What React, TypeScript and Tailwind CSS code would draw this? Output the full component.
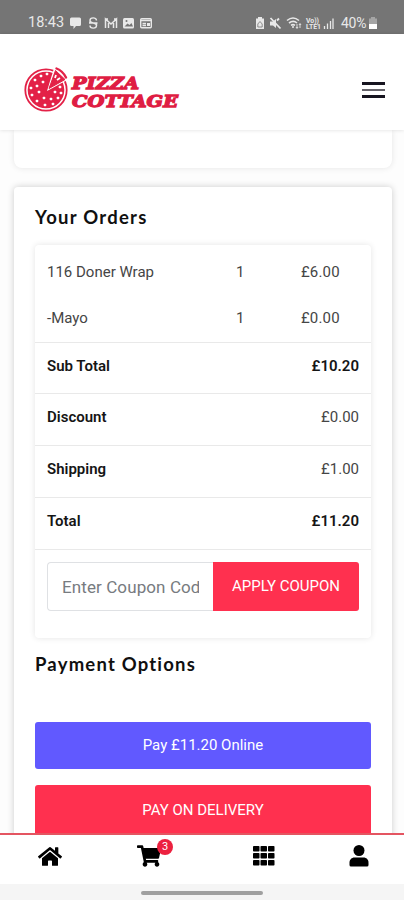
import { FaHome, FaShoppingCart } from 'react-icons/fa'

interface OrderItem {
  name: string
  quantity: number
  price: string
}

interface SummaryLine {
  label: string
  amount: string
  strong?: boolean
}

const items: OrderItem[] = [
  { name: '116 Doner Wrap', quantity: 1, price: '£6.00' },
  { name: '-Mayo', quantity: 1, price: '£0.00' },
]

const summary: SummaryLine[] = [
  { label: 'Sub Total', amount: '£10.20', strong: true },
  { label: 'Discount', amount: '£0.00' },
  { label: 'Shipping', amount: '£1.00' },
  { label: 'Total', amount: '£11.20', strong: true },
]

const pepperoni = [
  [17, 12], [23, 10], [11, 16], [19, 18], [13, 22], [7, 24], [15, 28], [8, 31],
  [13, 37], [20, 34], [21, 41], [27, 35], [29, 40], [34, 34], [31, 28], [37, 29], [36, 23],
]

function StatusBar() {
  return (
    <div className="flex h-[34px] shrink-0 bg-[#757575] pt-[15px] pl-[28px] text-[#e8e8e8]">
      <span className="w-[42px] text-[14.5px] leading-4 whitespace-nowrap">18:43</span>
      <svg className="h-4 w-[84px]" viewBox="0 0 84 16" fill="none" stroke="currentColor">
        <path d="M1.5 2.500h8A1.500 1.500 0 0 1 11 4v5.500A1.500 1.500 0 0 1 9.500 11H6l-2.500 3v-3h-2A1.500 1.500 0 0 1 0 9.500V4a1.500 1.500 0 0 1 1.500-1.500z" fill="currentColor" stroke="none" />
        <path d="M26.500 5.500C26.500 2 20 2 20 5.500S26.500 7 26.500 10.500 20 14 20 10.500M20 5.500V8M26.500 8v3M19 8h8.500" strokeWidth="1.4" />
        <path d="M35.500 13V4l5.500 5 5.500-5v9M38.500 13V8M43.500 13V8M35 4h3M44 4h3" strokeWidth="1.5" />
        <rect x="53" y="3" width="11" height="10.500" rx="1.500" fill="currentColor" stroke="none" />
        <path d="m54.500 11.500 3-3 2 1.500 2-2 1.500 3.500z" fill="#757575" stroke="none" />
        <circle cx="56.500" cy="6" r="1" fill="#757575" stroke="none" />
        <rect x="70.700" y="3.700" width="10.600" height="9" rx="1" strokeWidth="1.400" />
        <path d="M71 5.500h10M72.500 8.500h3.500M72.500 10.500h3.500" strokeWidth="1.600" />
        <path d="M77 8h3v3h-3z" fill="currentColor" stroke="none" />
      </svg>
      <svg className="ml-[100px] h-4 w-[84px]" viewBox="0 0 84 16" fill="none" stroke="currentColor">
        <path d="M4 2h4v1.500h2V14H2V3.500h2z" fill="currentColor" stroke="none" />
        <path d="m3.800 9 2.200-2.500L8.200 9v3H3.800z" stroke="#757575" strokeWidth="0.800" />
        <path d="M16 6.500h3L22 4v9l-3-2.500h-3z" fill="currentColor" stroke="none" />
        <path d="m16.500 3 10 10.500M25 3.500l-2 2" strokeWidth="1.800" />
        <path d="M33 5.500c4-3.300 8-3.300 12 0M35 8c3-2.300 5.500-2.300 8 0M37 10.300c1.500-1 2.500-1 4 0" strokeWidth="1.600" />
        <circle cx="39" cy="12" r="1" fill="currentColor" stroke="none" />
        <path d="M43 9v4m-1-1 1 1.500L44 12M46 13V9m-1 1 1-1.500L47 10" strokeWidth="0.900" />
        <text x="52" y="7.500" fontSize="6.500" fontWeight="700" textLength="13" lengthAdjust="spacingAndGlyphs" fill="currentColor" stroke="none">Vo))</text>
        <text x="52" y="14" fontSize="6.500" fontWeight="700" textLength="15" lengthAdjust="spacingAndGlyphs" fill="currentColor" stroke="none">LTE1</text>
        <path d="M70.500 14v-3M73.500 14V8.500M76.500 14V6M79 14V3.500" strokeWidth="1.300" />
      </svg>
      <span className="ml-[3px] w-7 text-[14px] leading-4 tracking-[-0.3px] whitespace-nowrap">40%</span>
      <svg className="-ml-px h-4 w-2.5" viewBox="0 0 10 16">
        <path d="M3 2h4v1.500h2V9H1V3.500h2z" fill="#a5a5a5" />
        <path d="M1 9h8v5H1z" fill="#fff" />
      </svg>
    </div>
  )
}

function Logo() {
  return (
    <svg className="h-12 w-[160px]" viewBox="0 0 160 48" fill="none">
      <circle cx="22" cy="26" r="20.700" stroke="#e32147" strokeWidth="1.800" />
      <circle cx="22" cy="26" r="18.300" fill="#e32147" />
      <path d="M23 27 31 1l16 13z" fill="#fff" />
      {pepperoni.map(([x, y]) => (
        <rect key={`${x}-${y}`} x={x - 1.3} y={y - 1.3} width="2.600" height="2.600" rx="0.700" fill="#fff" />
      ))}
      <path d="m25 24.500 6.500-18 9.500 9z" fill="#e32147" stroke="#e32147" />
      <path d="M32.500 4.500c4 1.500 7.500 5 9.500 9" stroke="#e32147" strokeWidth="2.400" strokeLinecap="round" />
      <path d="m32 11-1 3M36 14l-3 2" stroke="#fff" strokeWidth="1.800" />
      <g
        fill="#df1d43"
        stroke="#df1d43"
        strokeWidth="1.300"
        fontFamily="'DejaVu Serif', serif"
        fontWeight="700"
        fontStyle="italic"
        fontSize="17.500"
      >
        <text x="48" y="25" textLength="67" lengthAdjust="spacingAndGlyphs">PIZZA</text>
        <text x="48" y="43" textLength="106" lengthAdjust="spacingAndGlyphs">COTTAGE</text>
      </g>
    </svg>
  )
}

function Header() {
  return (
    <header className="z-10 flex h-24 shrink-0 items-center justify-between bg-white pt-[16px] pr-[19px] pb-1 pl-6 shadow-[0_0_4px_rgba(0,0,0,0.14)]">
      <Logo />
      <button className="mt-1 flex w-[23px] flex-col gap-1" aria-label="Menu">
        <span className="h-[2.500px] w-full bg-[#171520]" />
        <span className="h-[2.500px] w-full bg-[#65636a]" />
        <span className="h-[2.500px] w-full bg-[#171520]" />
      </button>
    </header>
  )
}

function OrderCard() {
  return (
    <div className="h-[393px] rounded bg-white text-[15px] text-[#454545] shadow-[0_0_6px_rgba(0,0,0,0.11)]">
      <div className="h-[96.500px] pt-1">
        {items.map((item) => (
          <div key={item.name} className="grid h-[46px] grid-cols-[189px_65px_1fr] items-center pl-3">
            <span>{item.name}</span>
            <span>{item.quantity}</span>
            <span className="tracking-[0.15px]">{item.price}</span>
          </div>
        ))}
      </div>
      {summary.map((line) => (
        <div key={line.label} className="flex h-[51.9px] justify-between border-t border-[#e9e9e9] px-3 pt-3 leading-[22px]">
          <span className="font-semibold text-[#151515]">{line.label}</span>
          <span className={line.strong ? 'font-semibold text-[#151515]' : ''}>{line.amount}</span>
        </div>
      ))}
      <div className="border-t border-[#e9e9e9] px-3 pt-3">
        <div className="flex h-[49px]">
          <input
            className="w-[166px] min-w-0 rounded-l border border-r-0 border-[#dfe1e4] bg-white px-[14px] pt-0.5 text-[17px] tracking-[0.1px] placeholder:text-[#777b80] focus:outline-none"
            placeholder="Enter Coupon Code"
          />
          <button className="flex-1 rounded-r-[3px] bg-[#ff304f] text-[15px] whitespace-nowrap text-white">APPLY COUPON</button>
        </div>
      </div>
    </div>
  )
}

function GridIcon() {
  return (
    <svg className="h-5 w-[22px]" viewBox="0 0 22 20">
      {[0, 7.5, 15].map((x) =>
        [0, 7, 14].map((y) => <rect key={`${x}-${y}`} x={x} y={y} width="6.500" height="5.600" rx="0.800" />)
      )}
    </svg>
  )
}

function UserIcon() {
  return (
    <svg className="h-[22px] w-5" viewBox="0 0 20 22">
      <circle cx="10" cy="5.500" r="5.500" />
      <path d="M5.500 12.500h9c3 0 5 2.300 5 5V20a1.500 1.500 0 0 1-1.500 1.500H2A1.500 1.500 0 0 1 .5 20v-2.500c0-2.700 2-5 5-5z" />
    </svg>
  )
}

function BottomNav() {
  return (
    <nav className="z-10 flex h-[51px] shrink-0 items-start border-t-2 border-[#e45561] bg-white pt-2.5 pl-[38px] text-black">
      <FaHome className="h-[23px] w-6" />
      <div className="relative ml-[75px]">
        <FaShoppingCart className="h-[22px] w-6" />
        <span className="absolute -top-[6px] left-[20px] flex size-[16px] items-center justify-center rounded-full bg-[#ec213f] text-[11px] text-white">
          3
        </span>
      </div>
      <div className="ml-[92px] pt-[1px]">
        <GridIcon />
      </div>
      <div className="ml-[74px]">
        <UserIcon />
      </div>
    </nav>
  )
}

export default function App() {
  return (
    <div className="flex h-[900px] w-[404px] flex-col overflow-hidden bg-white font-[Roboto,sans-serif]">
      <StatusBar />
      <Header />
      <main className="flex h-[703px] flex-col overflow-hidden bg-[#fdfdfd] pr-[12px] pl-[14px]">
        <div className="h-[38px] shrink-0 rounded-b-lg bg-white shadow-[0_0_6px_rgba(0,0,0,0.1)]" />
        <section className="mt-[19px] h-[680px] shrink-0 rounded-t bg-white px-[21px] pt-[18px] shadow-[0_0_7px_rgba(0,0,0,0.2)]">
          <h2 className="mb-[15px] font-[Lato,sans-serif] text-[18.5px] leading-[25px] font-bold tracking-[1.25px] text-[#101010]">Your Orders</h2>
          <OrderCard />
          <h2 className="mt-[14px] font-[Lato,sans-serif] text-[18.5px] leading-[25px] font-bold tracking-[1.2px] text-[#101010]">Payment Options</h2>
          <button className="mt-[45px] block h-[47px] w-full rounded-[3px] bg-[#6159ff] text-[15px] text-white">Pay £11.20 Online</button>
          <button className="mt-[16px] block h-[51px] w-full rounded-[3px] bg-[#ff304f] text-[15px] text-white">PAY ON DELIVERY</button>
        </section>
      </main>
      <BottomNav />
      <div className="flex h-4 shrink-0 justify-center bg-[#f5f5f5] pt-[7px]">
        <div className="h-1 w-[122px] rounded-full bg-[#a0a0a0]" />
      </div>
    </div>
  )
}
